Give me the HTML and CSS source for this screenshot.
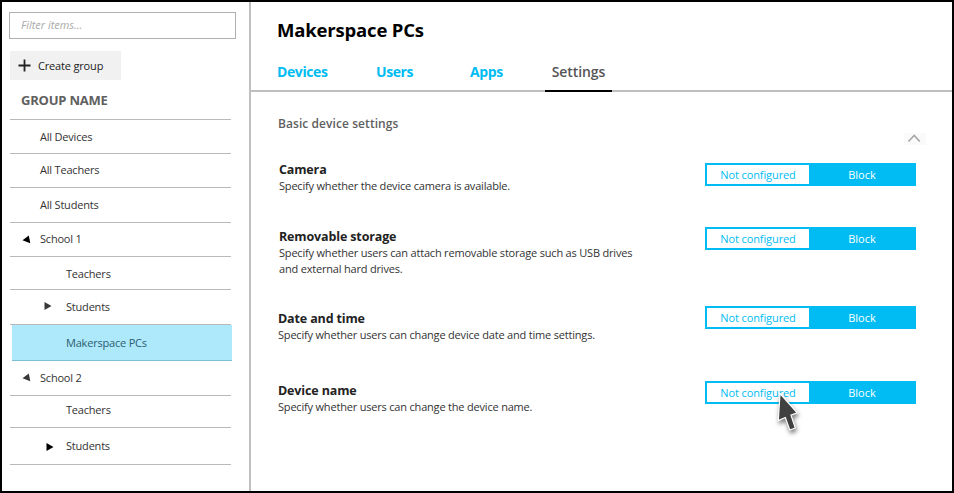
FILE: index.html
```
<!DOCTYPE html>
<html lang="en">
<head>
<meta charset="utf-8">
<title>Makerspace PCs</title>
<link rel="stylesheet" href="styles.css">
</head>
<body>
<div class="window">
  <aside class="sidebar">
    <input class="filter" type="text" placeholder="Filter items..." aria-label="Filter items">
    <button class="create"><svg class="plus" viewBox="0 0 13 13"><path d="M6.5 0.5v12M0.500 6.500h12"/></svg><span>Create group</span></button>
    <h2 class="group-title">GROUP NAME</h2>
    <ul class="groups">
      <li class="level"><span>All Devices</span></li>
      <li><span>All Teachers</span></li>
      <li><span>All Students</span></li>
      <li><svg class="open" viewBox="0 0 9 9"><path d="M0.500 5.200L6.800 0.500L8.300 8.300z"/></svg><span>School 1</span></li>
      <li class="child level"><span>Teachers</span></li>
      <li class="child"><svg class="closed gray" viewBox="0 0 8 8"><path d="M0.500 0L7.500 4L0.500 8z"/></svg><span>Students</span></li>
      <li class="child selected level"><span>Makerspace PCs</span></li>
      <li><svg class="open gray raised" viewBox="0 0 9 9"><path d="M0.500 5.200L6.800 0.500L8.300 8.300z"/></svg><span>School 2</span></li>
      <li class="child high"><span>Teachers</span></li>
      <li class="child"><svg class="closed shifted" viewBox="0 0 8 8"><path d="M0.500 0L7.500 4L0.500 8z"/></svg><span>Students</span></li>
    </ul>
  </aside>
  <main class="main">
    <header class="header">
      <h1>Makerspace PCs</h1>
      <nav class="tabs">
        <a class="tab devices">Devices</a>
        <a class="tab users">Users</a>
        <a class="tab apps">Apps</a>
        <a class="tab active">Settings</a>
      </nav>
    </header>
    <section class="section">
      <div class="section-head">
        <h2>Basic device settings</h2>
        <span class="collapse"><svg viewBox="0 0 22 12"><path d="M4.500 8.500L10.200 2.500L15.800 8.500"/></svg></span>
      </div>
      <div class="settings">
        <div class="setting inset">
          <div class="info"><h3>Camera</h3><p>Specify whether the device camera is available.</p></div>
          <div class="toggle"><span class="off">Not configured</span><span class="on">Block</span></div>
        </div>
        <div class="setting inset storage">
          <div class="info"><h3>Removable storage</h3><p>Specify whether users can attach removable storage such as USB drives<br>and external hard drives.</p></div>
          <div class="toggle"><span class="off">Not configured</span><span class="on">Block</span></div>
        </div>
        <div class="setting date">
          <div class="info"><h3>Date and time</h3><p>Specify whether users can change device date and time settings.</p></div>
          <div class="toggle"><span class="off">Not configured</span><span class="on">Block</span></div>
        </div>
        <div class="setting name">
          <div class="info"><h3>Device name</h3><p>Specify whether users can change the device name.</p></div>
          <div class="toggle"><span class="off">Not configured</span><span class="on">Block</span>
            <svg class="cursor" viewBox="0 0 32 52"><path d="M9 5.500L26.200 24.800L20 27.200L24.300 40L18.800 42L14.300 29.500L7.300 32.500z"/></svg>
          </div>
        </div>
      </div>
    </section>
  </main>
</div>
</body>
</html>
```
FILE: styles.css
```
* { box-sizing: border-box; }
body { margin: 0; font-family: "Open Sans", "Noto Sans", sans-serif; font-size: 11px; color: #333; }
h1, h2, h3, p, ul { margin: 0; padding: 0; }
.window { display: flex; width: 954px; height: 493px; border: 2px solid #000; background: #fff; }

.sidebar { width: 249px; padding: 10px 0 0 7px; border-right: 2px solid #bfbfbf; }
.filter { display: block; width: 227px; height: 27px; padding: 0 0 2px 11px; border: 1px solid #b0b0b0; font: italic 11px "Open Sans", sans-serif; letter-spacing: -0.03px; outline: none; }
.filter::placeholder { color: #aaa; opacity: 1; }
.create { display: flex; align-items: center; width: 111px; height: 29px; margin: 12px 0 0 1px; padding: 0 0 0 8px; gap: 7px; border: 0; background: #f1f1f1; font: 11px "Open Sans", sans-serif; letter-spacing: -0.17px; color: #222; }
.plus { width: 13px; height: 13px; fill: none; stroke: #222; stroke-width: 1.8; }
.group-title { height: 39px; padding-left: 12px; line-height: 41px; font-size: 13px; letter-spacing: -0.22px; font-weight: 700; color: #606060; }
.groups { display: grid; grid-template-rows: 34px 34px 35px 34px 33px 35px 36px 35px 32px 37px; grid-template-columns: 221px; width: 221px; margin-left: 1px; border-top: 1px solid #b9b9b9; list-style: none; letter-spacing: -0.2px; }
.groups li { display: flex; align-items: center; padding-left: 30px; border-bottom: 1px solid #b9b9b9; }
.groups li span { margin-bottom: 2px; }
.groups .level span { margin-bottom: 0; }
.groups .high span { margin-bottom: 4px; }
.groups .child { padding-left: 56px; }
.groups svg { fill: #000; }
.groups .gray { fill: #383838; }
.open { width: 9px; height: 9px; margin: 0 9px 0 -18px; }
.raised { margin-bottom: 2px; }
.closed { width: 8px; height: 8px; margin: 0 14px 0 -22px; }
.gray.closed { margin-bottom: 2px; }
.shifted { margin: 2px 12px 0 -20px; }
.groups .selected { width: 220px; margin-left: 2px; padding-left: 54px; background: #aee8fb; border-color: #7dbfd2; color: #2a5e70; }

.main { flex: 1; }
.header { height: 90px; padding: 16px 0 0 26px; border-bottom: 2px solid #bfbfbf; }
h1 { height: 24px; line-height: 24px; font-size: 18.5px; font-weight: 700; letter-spacing: -0.18px; color: #000; }
.tabs { display: flex; height: 32px; margin-top: 18px; }
.tab { line-height: 24px; font-size: 14px; font-weight: 700; letter-spacing: -0.4px; color: #00bcf2; }
.devices { width: 99px; }
.users { width: 94px; }
.apps { width: 75px; }
.active { width: 67px; height: 32px; border-bottom: 2px solid #000; text-align: center; font-weight: 600; letter-spacing: -0.08px; color: #555; }

.section { padding: 23px 26px 0 27px; }
.section-head { display: flex; justify-content: space-between; height: 48px; }
.section-head h2 { line-height: 18px; font-size: 12px; font-weight: 600; letter-spacing: 0.07px; color: #606060; }
.collapse { width: 22px; height: 12px; margin-top: 18px; background: #fafafa; }
.collapse svg { display: block; fill: none; stroke: #a5a5a5; stroke-width: 1.6; }
.settings { display: grid; grid-template-rows: 64px 79px 75px 60px; }
.setting { display: flex; justify-content: space-between; margin-right: 10px; }
.inset .info { padding-left: 1px; }
.storage .info, .name .info { padding-top: 3px; }
.date .info { padding-top: 6px; }
h3 { height: 15px; line-height: 14px; font-size: 12.5px; letter-spacing: -0.14px; font-weight: 700; color: #222; }
.info p { line-height: 16px; letter-spacing: -0.19px; }
.toggle { position: relative; display: flex; width: 211px; height: 23px; border: 2px solid #00bcf2; background: #00bcf2; line-height: 20px; text-align: center; }
.off { width: 102px; background: #fff; color: #00bcf2; letter-spacing: -0.1px; }
.on { flex: 1; padding-left: 1px; color: #fff; }
.cursor { position: absolute; left: 64px; top: 5px; width: 32px; height: 52px; fill: #404040; stroke: #fff; stroke-width: 1.2; filter: drop-shadow(1px 3px 2px rgba(0, 0, 0, 0.5)); }
```
